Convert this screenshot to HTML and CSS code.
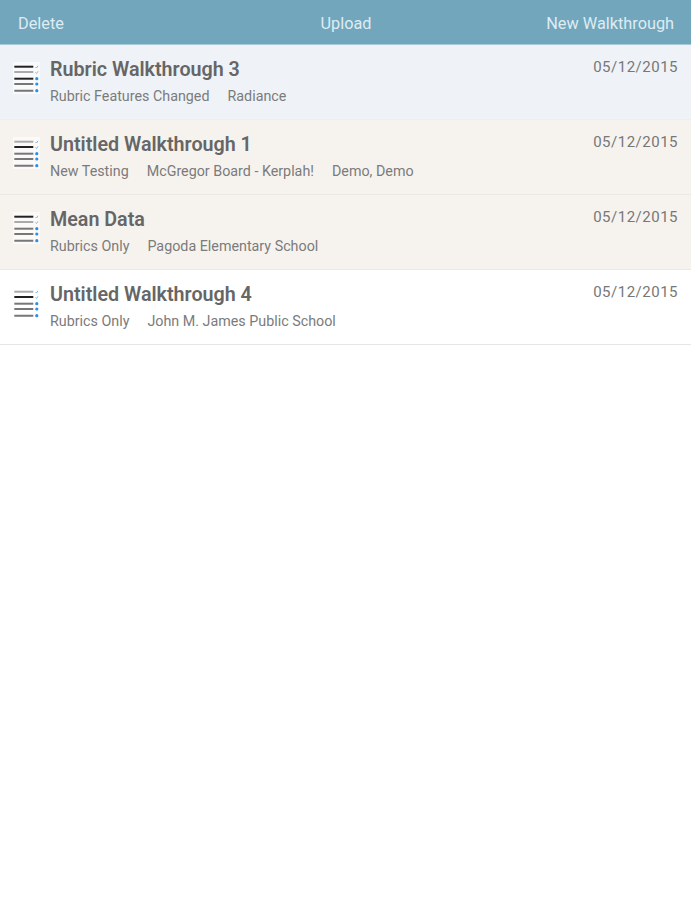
FILE: index.html
```html
<!DOCTYPE html>
<html lang="en">
<head>
    <meta charset="UTF-8">
    <meta name="viewport" content="width=device-width, initial-scale=1.0">
    <link rel="stylesheet" href="styles.css">
    <title>Walkthroughs</title>
</head>
<body>
    <svg class="sprite" width="0" height="0">
        <symbol id="list-icon" viewBox="0 0 27 32">
            <path class="icon-line line-a" d="M1.300 4.700h19"/>
            <path class="icon-line line-b" d="M1.300 10h19"/>
            <path class="icon-line line-c" d="M1.300 16.700h19"/>
            <path class="icon-line line-d" d="M1.300 22h19M1.300 28.700h19"/>
            <path d="M22.500 5l1 1 1.500-2.200M22.500 10.500l1 1 1.500-2.200" stroke="#7fb8e6" stroke-width="1" fill="none"/>
            <circle cx="23.800" cy="16.700" r="1.600" fill="#2a8fe6"/>
            <circle cx="23.800" cy="22" r="1.600" fill="#2a8fe6"/>
            <circle cx="23.800" cy="28.700" r="1.600" fill="#2a8fe6"/>
        </symbol>
    </svg>

    <div class="toolbar">
        <span class="toolbar-item">Delete</span>
        <span class="toolbar-item toolbar-center">Upload</span>
        <span class="toolbar-item toolbar-right">New Walkthrough</span>
    </div>

    <div class="list">
        <div class="row row-selected">
            <svg class="row-icon icon-dark"><use href="#list-icon"/></svg>
            <div class="row-body">
                <div class="row-title">Rubric Walkthrough 3</div>
                <div class="row-meta">
                    <span>Rubric Features Changed</span>
                    <span>Radiance</span>
                </div>
            </div>
            <div class="row-date">05/12/2015</div>
        </div>
        <div class="row row-warm">
            <svg class="row-icon icon-gray"><use href="#list-icon"/></svg>
            <div class="row-body">
                <div class="row-title">Untitled Walkthrough 1</div>
                <div class="row-meta">
                    <span>New Testing</span>
                    <span>McGregor Board - Kerplah!</span>
                    <span>Demo, Demo</span>
                </div>
            </div>
            <div class="row-date">05/12/2015</div>
        </div>
        <div class="row row-warm">
            <svg class="row-icon icon-plain"><use href="#list-icon"/></svg>
            <div class="row-body">
                <div class="row-title">Mean Data</div>
                <div class="row-meta">
                    <span>Rubrics Only</span>
                    <span>Pagoda Elementary School</span>
                </div>
            </div>
            <div class="row-date">05/12/2015</div>
        </div>
        <div class="row">
            <svg class="row-icon icon-gray"><use href="#list-icon"/></svg>
            <div class="row-body">
                <div class="row-title">Untitled Walkthrough 4</div>
                <div class="row-meta">
                    <span>Rubrics Only</span>
                    <span>John M. James Public School</span>
                </div>
            </div>
            <div class="row-date">05/12/2015</div>
        </div>
    </div>
</body>
</html>
```

FILE: styles.css
```css
body {
    font-family: Roboto, "Liberation Sans", sans-serif;
    background-color: #fff;
    margin: 0;
    padding: 0;
}

.sprite {
    position: absolute;
}

.toolbar {
    display: grid;
    grid-template-columns: 1fr auto 1fr;
    align-items: center;
    height: 45px;
    padding: 3px 17px 0 18px;
    background-color: #71a6bd;
    border-bottom: 1px solid #a9c9d6;
    box-sizing: border-box;
    color: #dfecf2;
    font-size: 16.3px;
}

.toolbar-right {
    text-align: right;
}

.row {
    display: flex;
    align-items: flex-start;
    height: 75px;
    box-sizing: border-box;
    padding: 13px 13px 0 13px;
    border-bottom: 1px solid #e6e6e6;
    background-color: #fff;
    color: #666;
}

.row-selected {
    background-color: #eff3f7;
    border-bottom-color: #eceeef;
}

.row-warm {
    background-color: #f6f3ef;
    border-bottom-color: #ebe9e6;
}

.row-icon {
    width: 27px;
    height: 32px;
    margin-top: 4px;
    flex-shrink: 0;
    background-color: rgba(255, 255, 255, 0.6);
}

.icon-line {
    fill: none;
    stroke-width: 2;
}

.line-a {
    stroke: var(--line-a);
}

.line-b {
    stroke: var(--line-b);
}

.line-c {
    stroke: var(--line-c);
}

.line-d {
    stroke: #777;
}

.icon-dark {
    --line-a: #222;
    --line-b: #aaa;
    --line-c: #222;
}

.icon-gray {
    --line-a: #aaa;
    --line-b: #222;
    --line-c: #777;
}

.icon-plain {
    --line-a: #222;
    --line-b: #aaa;
    --line-c: #777;
}

.row-body {
    flex: 1;
    margin-left: 10px;
}

.row-title {
    font-size: 19.7px;
    font-weight: 600;
    line-height: 24px;
}

.row-meta {
    display: flex;
    gap: 18px;
    margin-top: 3px;
    font-size: 14.3px;
    line-height: 22px;
    color: #7b7b7b;
}

.row-date {
    font-size: 15px;
    line-height: 18px;
    letter-spacing: 0.5px;
    color: #777;
}
```
